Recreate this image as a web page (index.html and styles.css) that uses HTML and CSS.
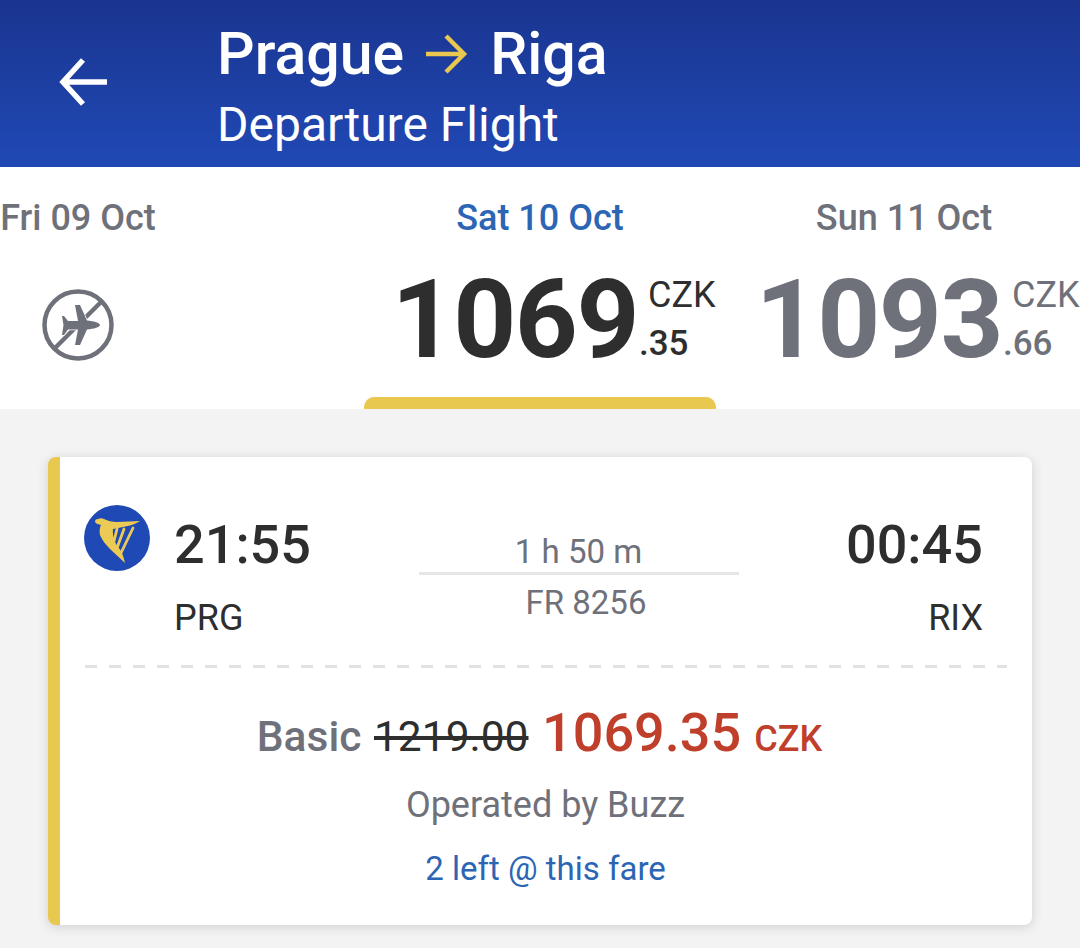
FILE: index.html
```html
<!DOCTYPE html>
<html lang="en">
<head>
<meta charset="utf-8">
<title>Prague to Riga</title>
<link rel="stylesheet" href="styles.css">
</head>
<body>
<header class="topbar">
  <svg class="back" viewBox="0 0 50 50" aria-hidden="true"><path d="M48 25H5M24 3 4 25l20 22" fill="none" stroke="#fff" stroke-width="5.5"/></svg>
  <div class="titles">
    <h1 class="route">Prague<svg class="route-arrow" viewBox="0 0 42 42" aria-hidden="true"><path d="M0 21H38M20 3 38 21 20 39" fill="none" stroke="#e8c84f" stroke-width="4.5"/></svg>Riga</h1>
    <p class="sub">Departure Flight</p>
  </div>
</header>
<section class="dates">
  <div class="day day-none">
    <div class="day-label">Fri 09 Oct</div>
    <svg class="noflight" viewBox="0 0 72 72" aria-hidden="true">
      <circle cx="36" cy="36" r="33.5" fill="none" stroke="#6f717a" stroke-width="4.5"/>
      <path d="M12 60 60 12" stroke="#6f717a" stroke-width="4.5"/>
      <path d="M58 36c0 2-6 4-13 4.500L38 56h-5l3-15.500H26L22 46h-2l1.500-10L20 27h2l4 5h10l-3-16h5l7 15.500C52 32 58 34 58 36z" fill="#6f717a" stroke="#fff" stroke-width="1.500" paint-order="stroke"/>
    </svg>
  </div>
  <div class="day day-active">
    <div class="day-label">Sat 10 Oct</div>
    <div class="price"><span class="whole">1069</span><span class="side"><span class="cur">CZK</span><span class="cents">.35</span></span></div>
  </div>
  <div class="day day-next">
    <div class="day-label">Sun 11 Oct</div>
    <div class="price"><span class="whole">1093</span><span class="side"><span class="cur">CZK</span><span class="cents">.66</span></span></div>
  </div>
</section>
<main class="content">
  <article class="card">
    <div class="flight">
      <svg class="logo" viewBox="0 0 66 66" aria-hidden="true">
        <circle cx="33" cy="33" r="33" fill="#1f49b4"/>
        <path d="M11 17c0-2 1-3 3-3 2-1 4-1 6 0 4 2 8 3 13 3 8 0 16-1 23-1-4 3-11 5-17 6-3 1-7 1-10 2-1 3-1 6 0 9 2 5 5 9 8 13 2 4 3 8 4 12-5-5-10-9-15-14-4-4-8-9-10-14-1-4 0-8 1-10-2-1-5-1-6-3z" fill="#eccb55"/>
        <path d="M27 24l1 9M33 24l-4 16M40 24l-7 19M49 23l-12 25" stroke="#eccb55" stroke-width="2.800" stroke-linecap="round" fill="none"/>
      </svg>
      <div class="leg">
        <div class="time">21:55</div>
        <div class="code">PRG</div>
      </div>
      <div class="mid">
        <div class="dur">1 h 50 m</div>
        <div class="num">FR 8256</div>
      </div>
      <div class="leg leg-end">
        <div class="time">00:45</div>
        <div class="code">RIX</div>
      </div>
    </div>
    <div class="divider"></div>
    <div class="fare">
      <div class="fare-line"><span class="fare-name">Basic</span> <s class="fare-old">1219.00</s> <span class="fare-new">1069.35</span> <span class="fare-cur">CZK</span></div>
      <div class="operator">Operated by Buzz</div>
      <div class="left">2 left @ this fare</div>
    </div>
  </article>
</main>
</body>
</html>
```
FILE: styles.css
```css
* { box-sizing: border-box; }
html, body { margin: 0; padding: 0; }
body {
  width: 1080px;
  height: 948px;
  overflow: hidden;
  background: #f3f3f3;
  font-family: Roboto, "Liberation Sans", sans-serif;
}
.topbar {
  height: 167px;
  display: flex;
  align-items: flex-start;
  padding: 57px 0 0 59px;
  background: linear-gradient(180deg, #1a3590 0%, #2049b5 100%);
  color: #fff;
}
.back { width: 50px; height: 50px; flex: none; }
.titles { margin: -36px 0 0 108px; }
.route {
  margin: 0;
  display: flex;
  align-items: center;
  font-size: 59px;
  line-height: 66px;
  font-weight: 500;
}
.route-arrow { width: 42px; height: 42px; margin: 0 22px 0 22px; }
.sub { margin: 10px 0 0; font-size: 48px; line-height: 56px; font-weight: 400; }
.dates {
  height: 242px;
  background: #fff;
  display: flex;
  overflow: hidden;
}
.day { position: relative; text-align: center; padding-top: 32px; }
.day-label { font-size: 36px; line-height: 38px; font-weight: 500; color: #6f717a; white-space: nowrap; }
.day-none { width: 156px; }
.noflight { display: block; width: 72px; height: 72px; margin: 52px 0 0 42px; }
.day-active { width: 352px; margin-left: 208px; height: 242px; }
.day-next { width: 352px; margin-left: 12px; }
.day-active .day-label { color: #2d65b5; }
.day-active::after {
  content: "";
  position: absolute;
  left: 0;
  right: 0;
  bottom: 0;
  height: 12px;
  background: #e8c84f;
  border-radius: 10px 10px 0 0;
}
.price { display: flex; justify-content: flex-end; margin-top: 17px; color: #6f717a; }
.day-active .price { color: #2e2e2e; }
.whole { font-size: 110px; line-height: 132px; font-weight: 700; letter-spacing: -1.5px; }
.side { display: flex; flex-direction: column; align-items: flex-start; padding: 19px 0 0; width: 78px; }
.cur { font-size: 36px; line-height: 44px; padding-left: 10px; font-weight: 400; }
.cents { font-size: 35px; line-height: 44px; font-weight: 500; margin: 5px 0 0 1px; }
.content { padding: 48px 48px 0; }
.card {
  height: 468px;
  background: #fff;
  border-left: 12px solid #e8c84f;
  border-radius: 8px;
  box-shadow: 0 2px 12px rgba(0, 0, 0, .14);
  padding: 0 25px;
}
.flight {
  height: 207px;
  display: flex;
  align-items: flex-start;
  padding: 48px 24px 0 0;
}
.logo { width: 66px; height: 66px; flex: none; margin-left: -1px; }
.leg { width: 160px; margin: 10px 0 0 24px; }
.time { font-size: 54px; line-height: 60px; font-weight: 500; color: #2e2e2e; }
.code { font-size: 36px; line-height: 42px; color: #2e2e2e; margin-top: 22px; }
.leg-end { margin-left: auto; text-align: right; width: 160px; }
.mid { width: 320px; margin-left: 85px; text-align: center; color: #6f717a; padding-top: 28px; }
.dur { font-size: 33px; line-height: 38px; padding: 0 1px 1px 0; border-bottom: 3px solid #e6e6e6; }
.num { font-size: 33px; line-height: 38px; margin-top: 9px; padding-left: 14px; }
.divider {
  height: 3px;
  margin-top: 1px;
  background: repeating-linear-gradient(90deg, #e2e2e2 0 12px, transparent 12px 24px);
}
.fare { text-align: center; padding-top: 34px; padding-right: 1px; }
.fare-line { font-size: 42.500px; line-height: 62px; white-space: nowrap; padding-right: 12px; }
.fare-name { font-weight: 500; color: #6f717a; }
.fare-old { color: #2e2e2e; margin-left: 2px; }
.fare-new { font-size: 54px; font-weight: 500; color: #bf3f2b; margin-left: 3px; }
.fare-cur { font-size: 36px; font-weight: 500; color: #bf3f2b; margin-left: 2.500px; }
.operator { font-size: 36px; line-height: 40px; color: #6f717a; margin-top: 15px; }
.left { font-size: 33px; line-height: 40px; color: #2d65b5; margin-top: 24px; }
```
